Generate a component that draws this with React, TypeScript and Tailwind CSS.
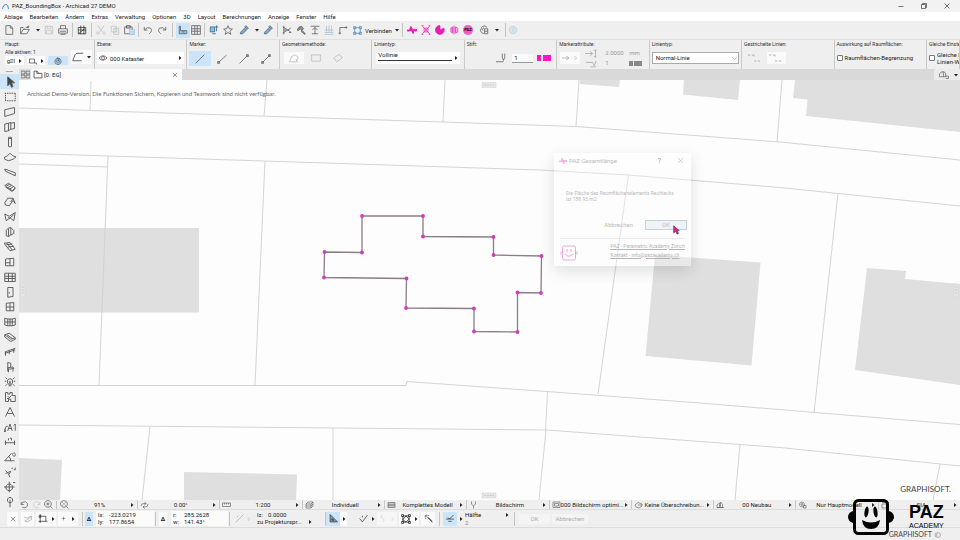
import React from "react";
import clsx from "clsx";

interface IconProps {
  d: string;
  className?: string;
  fill?: string;
}

const Icon = ({ d, className = "w-[10px] h-[10px]", fill = "none" }: IconProps) => (
  <svg
    viewBox="0 0 16 16"
    fill={fill}
    stroke="currentColor"
    strokeWidth="1.2"
    strokeLinejoin="round"
    className={clsx("shrink-0", className)}
    aria-hidden="true"
  >
    <path d={d} />
  </svg>
);

const Caret = ({ down = false }: { down?: boolean }) => (
  <svg viewBox="0 0 8 8" className="w-[4px] h-[4px] shrink-0" fill="#222" aria-hidden="true">
    <path d={down ? "M0 2h8L4 7z" : "M2 0v8l5-4z"} />
  </svg>
);

const Sep = ({ className = "w-[5px]" }: { className?: string }) => (
  <span className={clsx("flex justify-center h-[14px] shrink-0", className)}>
    <span className="w-px bg-[#c4c4c4]" />
  </span>
);

interface ToolProps {
  label: string;
  className?: string;
  children?: React.ReactNode;
}

const Tool = ({ label, className = "w-[14px]", children }: ToolProps) => (
  <button
    aria-label={label}
    className={clsx("flex items-center justify-center h-[15px] shrink-0", className)}
  >
    {children}
  </button>
);

const menus = [
  "Ablage",
  "Bearbeiten",
  "Ändern",
  "Extras",
  "Verwaltung",
  "Optionen",
  "3D",
  "Layout",
  "Berechnungen",
  "Anzeige",
  "Fenster",
  "Hilfe",
];

const palette = [
  { name: "Pfeil", d: "M5 1v12l3-3 2 5 2-1-2-5h4z", fill: "#444" },
  { name: "Markierung", d: "M1 3h2m1 0h2m1 0h2m1 0h2m1 0h2v2m0 1v2m0 1v2m0 1v1h-2m-1 0h-2m-1 0h-2m-1 0h-2m-1 0h-1v-2m0-1v-2m0-1v-2m0-1v-1" },
  { name: "Wand", d: "M1 5l13-3v8L1 14z" },
  { name: "Tür in Wand", d: "M1 4l5-1v10l-5 1zM6 3l3-1v9l-3 2M9 3l5-1v8l-5 1" },
  { name: "Stütze", d: "M6 2q2-1 4 0v12q-2 1-4 0zM6 3q2 1 4 0" },
  { name: "Decke", d: "M0 9l5-3 3-3 3 3 5 2-4 3-6 2-5-2z" },
  { name: "Unterzug", d: "M1 4l14 5v4L2 7z" },
  { name: "Treppe", d: "M1 6l5-3 9 6-4 4zM3 7l5-3M5 9l5-3M7 11l5-3M2 8l9 6 4-4" },
  { name: "Dach", d: "M1 9l4-6h7l3 7-3-4-5 7-5-1zM12 3L9 8" },
  { name: "Schale", d: "M1 4l6 3 8-5-2 11-5-4-5 4zM6 8l1 2 6-5" },
  { name: "Morph", d: "M3 13V6q2-4 6-4v10l-3 2zM9 2l4 4v4l-4 2M6 4v10" },
  { name: "Netz", d: "M0 3l8-1 7 9-7 2zM3 5l8-1M5 8l8-1M4 3l7 9" },
  { name: "Fenster", d: "M2 4l11-1v10H2zM8 3v10M2 9h6" },
  { name: "Fassade", d: "M1 3h14v11H1zM6 3v11M11 3v11M1 7h14M1 10h14" },
  { name: "Tür", d: "M5 2h7v12l-7 1zM7 8v2" },
  { name: "Dachfenster", d: "M3 3l10-1v11H3zM8 3v10M3 8h10" },
  { name: "Raster", d: "M1 3l4 1h6l4-1v9l-4 1H5l-4-1zM5 4v9M8 4v9M11 4v9M1 8h14" },
  { name: "Platte", d: "M1 5l6-2 8 6-6 2zM1 5v3l8 6 6-3V9M4 5l7 5" },
  { name: "Geländer", d: "M1 8l14-5M1 10l14-5M2 8v5M7 6v5M13 4v5" },
  { name: "Objekt", d: "M5 2v7l7-1 1 2-7 1-1-2M5 9v5M6 11v4M12 10v4M5 2l4 1v5" },
  { name: "Lampe", d: "M6 11q-3-3-1-6 3-3 6 0 2 3-1 6zM6 13h4M1 7h2M13 7h2M2 2l2 2M14 2l-2 2M2 13l2-2M14 13l-2-2M7 7l1 3 1-3" },
  { name: "Raum", d: "M2 2h3v2h3V2h3v4h4v8H9v-3H6v3H2zM5 7l2 2 3-3M4 10h3" },
  { name: "Text", d: "M2 14L8 2l6 12M4 10h8" },
  { name: "Etikett", d: "M0 12h2v2H0zM1 12l2-5h2M5 13l3-9 3 9M6 10h4M13 6l2-2v9" },
  { name: "Bemaßung", d: "M1 9h14M2 6v6M14 6v6M6 3v3M8 3h2v3" },
  { name: "Winkel", d: "M1 13h13M1 13L10 3M6 7q3 2 3 6M11 4q4-3 4 1t-4 0" },
  { name: "Radius", d: "M2 6q4 3 6 9M2 10l7-3M9 7l-2 4M10 3h2M13 5h2V2" },
  { name: "Höhe", d: "M7 4a4.500 4.500 0 1 0 .01 0zM7 1v14M0 8h14M12 2h3" },
  { name: "Punkt", d: "M8 2a3.500 3.500 0 1 0 .01 0zM8 5v10" },
];

const TitleBar = () => (
  <header className="flex items-center h-[12px] pl-[2px] pr-[9px] bg-[#f2f2f2]">
    <svg viewBox="0 0 16 16" className="w-[7px] h-[7px]" fill="none" stroke="#3579b8" strokeWidth="2" aria-hidden="true">
      <path d="M0 14Q4 3 9 3t6 11" />
    </svg>
    <h1 className="ml-[3px] text-[6px] leading-[12px]">PAZ_BoundingBox - Archicad 27 DEMO</h1>
    <div className="flex items-center gap-[15px] ml-auto">
      <button aria-label="Minimieren"><Icon className="w-[8px] h-[8px]" d="M3 9h10" /></button>
      <button aria-label="Wiederherstellen"><Icon className="w-[8px] h-[8px]" d="M3 5h8v8H3zM5 5V3h8v8h-2" /></button>
      <button aria-label="Schließen"><Icon className="w-[8px] h-[8px]" d="M3 3l10 10M13 3L3 13" /></button>
    </div>
  </header>
);

const MenuBar = () => (
  <nav className="flex items-center h-[9px] pl-1 gap-[7px] bg-white">
    {menus.map((m) => (
      <button key={m} className="text-[6px] leading-[9px]">
        {m}
      </button>
    ))}
  </nav>
);

const dropper = "M2 14l1-3 6-6 3 3-6 6zM9 3l2-2 4 4-2 2z";

const Toolbar = () => (
  <div className="flex items-center h-[18px] pl-[2px] bg-[#efefef] text-[#555]">
    <Tool label="Neu"><Icon d="M3 1h7l4 4v10H3zM10 1v4h4" /></Tool>
    <Tool label="Öffnen" className="w-[18px]"><Icon d="M1 14V4h4l2 2M1 14h10l4-7H5zM9 5q2-4 5-2M14 1v3h-3" /></Tool>
    <Tool label="Zuletzt geöffnet" className="w-[8px]"><Caret down /></Tool>
    <Tool label="Sichern" className="w-[14px] text-[#c0c0c0]"><Icon d="M2 2h12v12H2zM5 2v4h6V2M4 14V9h8v5" /></Tool>
    <Tool label="Drucken"><Icon d="M4 6V1h8v5M1 6h14v7H1zM3 10h10M4 15h8" /></Tool>
    <Sep />
    <Tool label="Teamwork" className="w-[14px] text-[#333]"><Icon d="M2 4h12v10H2zM2 8h12M6 1v14M11 1v14M2 14l10-8" /></Tool>
    <Sep />
    <Tool label="Ausschneiden" className="w-[14px] text-[#c0c0c0]"><Icon d="M3 1l8 11M13 1L5 12M3 11a2 2 0 1 0 .01 0M13 11a2 2 0 1 0 .01 0" /></Tool>
    <Tool label="Kopieren" className="w-[14px] text-[#c0c0c0]"><Icon d="M2 2h8v9H2zM6 5h8v10H6zM8 8h4M8 11h4" /></Tool>
    <Tool label="Einfügen">
      <span className="relative">
        <Icon d="M1 3h12v11H1zM4 1h6v4H4z" />
        <Icon className="absolute -right-px bottom-0 w-[6px] h-[6px] text-[#5ba0dc]" fill="#d7eafa" d="M1 1h14v14H1zM3 6h10M3 11h10" />
      </span>
    </Tool>
    <Sep />
    <Tool label="Rückgängig"><Icon d="M2 3v5h5M2 8q5-6 10-3 4 4-2 9" /></Tool>
    <Tool label="Wiederholen"><Icon d="M14 3v5H9M14 8Q9 2 4 5q-4 4 2 9" /></Tool>
    <Sep className="w-[7px]" />
    <Tool label="Koordinaten" className="w-[14px] bg-[#cce4f7]"><Icon fill="#9cc8ec" d="M2 14V2h2v7h10v5zM6 11h5" /></Tool>
    <Tool label="Raster" className="w-[12px]"><Icon d="M1 1h14v14H1zM6 1v14M10 1v14M1 6h14M1 10h14" /></Tool>
    <Sep />
    <Tool label="Fangen" className="w-[14px] text-[#2f5f8c]"><Icon fill="#8fbce4" d="M2 3h7v8H2zM12 2v8M10 4l2-3 2 3M5 14h6" /></Tool>
    <Tool label="Favoriten"><Icon d="M8 1l2 5 5 .5-4 3.500 1.500 5L8 12l-4.500 3L5 10 1 6.500 6 6z" /></Tool>
    <Tool label="Aufnehmen" className="w-[18px] text-[#43617c]"><Icon fill="#8aa6bd" d={dropper} /></Tool>
    <Tool label="Aufnahmeoptionen" className="w-[8px]"><Caret down /></Tool>
    <Tool label="Übertragen" className="w-[14px] text-[#43617c]"><Icon fill="#8aa6bd" d={dropper} /></Tool>
    <Sep />
    <Tool label="Trennen"><Icon d="M1 3l13 8M1 13l13-8M2 8h5M3 1v14M11 12h4" /></Tool>
    <Tool label="Anpassen"><Icon fill="#999" d="M2 8q2-6 7-6l3 4-3 3-2-3-4 3zM9 8l6 6-1 1-6-5" /></Tool>
    <Tool label="Ausrichten"><Icon d="M1 2h14M8 4v10M4 8l4-4 4 4M3 14h10" /></Tool>
    <Tool label="Verteilen" className="w-[14px] text-[#a9bfd2]"><Icon d="M4 1v11M8 1v11M12 1v11M1 8h14M1 12h14M1 15h14" /></Tool>
    <Tool label="Ecke"><Icon d="M3 15V4h12M1 13h4M13 2v4" /></Tool>
    <button className="flex items-center w-[50px] h-[15px] pl-[3px] gap-[3px] text-[6px] text-[#222] shrink-0">
      <Icon className="w-[9px] h-[9px] text-[#4583b8]" d="M3 3h10v10H3zM1 1h4v4H1zM11 1h4v4h-4zM1 11h4v4H1zM11 11h4v4h-4z" />
      Verbinden
      <Caret down />
    </button>
    <Sep />
    <Tool label="PAZ Längen" className="w-[14px] text-[#e81cb0]"><Icon fill="#e81cb0" d="M0 8h4l2-6 3 5h7l-1 3-4-1-1 5-3-5-6 1z" /></Tool>
    <Tool label="PAZ Box" className="w-[14px] text-[#e81cb0]"><Icon d="M2 2l4 4M14 2l-4 4M2 14l4-4M14 14l-4-4M5 5h6v6H5zM7 7h2v2H7zM1 1h3M12 1h3M1 15h3M12 15h3" /></Tool>
    <Tool label="PAZ Flächen" className="w-[14px] text-[#e81cb0]"><Icon fill="#e81cb0" d="M8 1v7l6-3A7 7 0 1 1 8 1z" /></Tool>
    <Tool label="PAZ Spiegeln" className="w-[14px] text-[#e81cb0]"><Icon d="M8 1v14M6 3v10L3 11V5zM10 3l4 2v6l-4 2zM5 5v6M11 5v6" /></Tool>
    <Tool label="PAZ">
      <span className="flex items-center justify-center w-[10px] h-[10px] rounded-full bg-[#f05cc4] text-[4px] font-bold text-black">PAZ</span>
    </Tool>
    <Tool label="Grasshopper" className="w-[18px]"><Icon d="M13 4Q8-1 4 4q-4 6 1 9 2 1 3 0M8 4q-3 1-2 5M9 6h5v8H9zM9 10h5" /></Tool>
    <Tool label="Grasshopper-Optionen" className="w-[8px]"><Caret down /></Tool>
    <Sep className="w-[8px]" />
    <Tool label="Hilfe" className="w-[8px] text-[#b5cfdc]"><Icon fill="#d5e5ec" d="M8 2a6 6 0 1 0 .01 0zM8 5v6" /></Tool>
  </div>
);

interface PanelProps {
  title: string;
  children?: React.ReactNode;
}

const Panel = ({ title, children }: PanelProps) => (
  <section className="flex flex-col min-w-0 px-[2px] pt-px border-r border-[#c9c9c9] whitespace-nowrap overflow-hidden">
    <h2 className="text-[5px] leading-[7px] text-[#333]">{title}</h2>
    {children}
  </section>
);

const InfoBox = () => (
  <div className="grid grid-cols-[95px_repeat(9,minmax(0,1fr))_33px] h-[30px] border-t border-[#e2e2e2] bg-[#efefef] text-[#555]">
    <section className="pl-[5px] pt-px border-r border-[#c9c9c9]">
      <h2 className="text-[5px] leading-[7px] text-[#333]">Haupt:</h2>
      <div className="flex gap-[3px]">
        <div>
          <p className="text-[5px] leading-[8px] text-[#333]">Alle aktiven: 1</p>
          <div className="flex gap-[3px] text-[#222]">
            <button className="flex items-center justify-around w-[19px] h-[9px] bg-white text-[6px] leading-[8px]">g≡l <Caret /></button>
            <button aria-label="Geschoss" className="flex items-center justify-around w-[18px] h-[9px] bg-white">
              <Icon className="w-[8px] h-[8px]" d="M1 4h10v8H1zM11 12h4v3" />
              <Caret />
            </button>
            <button aria-label="Magnet" className="flex items-center justify-center w-[20px] h-[9px] bg-[#cce4f7]">
              <Icon className="w-[8px] h-[8px] text-[#234]" d="M8 3a6 6 0 1 0 .01 0zM8 6a3 3 0 1 0 .01 0zM5 3l4-3M8 9l3-7" />
            </button>
          </div>
        </div>
        <button aria-label="Linienzug" className="flex items-center justify-around w-[21px] h-[14px] mt-[2px] bg-[#fafafa]">
          <Icon className="w-[12px] h-[12px]" d="M1 13l3-8q1-2 4-2h7M1 13h12" />
          <Caret down />
        </button>
      </div>
    </section>
    <Panel title="Ebene:">
      <button className="flex items-center h-[12px] mt-[4px] px-[2px] bg-white text-[6px] text-[#222]">
        <Icon className="w-[8px] h-[8px] mr-[3px]" d="M0 8q8-9 16 0-8 9-16 0zM8 5a3 3 0 1 0 .01 0z" />
        000 Kataster
        <span className="ml-auto"><Caret /></span>
      </button>
    </Panel>
    <Panel title="Marker:">
      <div className="flex mt-[3px]">
        <button aria-label="Ohne Marker" className="flex items-center justify-center w-[22px] h-[15px] bg-[#cce4f7]"><Icon d="M1 15L15 1" /></button>
        <button aria-label="Marker am Anfang" className="flex items-center justify-center w-[22px] h-[15px]"><Icon d="M2 14L15 2M1 12h3v3H1z" /></button>
        <button aria-label="Marker am Ende" className="flex items-center justify-center w-[22px] h-[15px]"><Icon d="M1 15L14 2M12 1h3v3h-3z" /></button>
        <button aria-label="Marker beidseitig" className="flex items-center justify-center w-[22px] h-[15px]"><Icon d="M2 14L14 2M12 1h3v3h-3zM1 12h3v3H1z" /></button>
      </div>
    </Panel>
    <Panel title="Geometriemethode:">
      <div className="flex gap-[2px] mt-[4px] pl-[2px] text-[#b5b5b5]">
        <button aria-label="Polygon" className="flex items-center justify-center w-[20px] h-[12px] bg-[#fafafa]"><Icon d="M1 14l3-8 5-3 5 3v4l-3 1 3 3z" /></button>
        <button aria-label="Rechteck" className="flex items-center justify-center w-[20px] h-[12px]"><Icon d="M1 3h14v10H1z" /></button>
        <button aria-label="Gedrehtes Rechteck" className="flex items-center justify-center w-[20px] h-[12px]"><Icon d="M1 8l9-6 5 6-9 6z" /></button>
      </div>
    </Panel>
    <Panel title="Linientyp:">
      <button className="flex items-center h-[12px] mt-[4px] mx-[2px] px-[2px] bg-white text-[6px] leading-[6px] text-[#222]">
        <span className="self-start flex-1 pb-[2px] mr-[2px] border-b border-[#333] text-left">Vollinie</span>
        <Caret />
      </button>
    </Panel>
    <Panel title="Stift:">
      <div className="flex items-center justify-end mt-[5px] pr-[3px]">
        <Icon d="M0 14h12M10 1v6l2 5 2-5V1" />
        <input aria-label="Stift" defaultValue="1" className="w-[21px] h-[9px] ml-[6px] mr-[4px] px-[2px] bg-[#fafafa] border-b border-[#999] text-[6px] text-[#222]" />
        <span className="w-[4px] h-[6px] mr-[2px] bg-[#ff14bd]" />
        <span className="w-[8px] h-[6px] bg-[#ff14bd]" />
      </div>
    </Panel>
    <Panel title="Markerattribute:">
      <div className="flex items-center pl-[1px] text-[#999]">
        <button aria-label="Marker" className="flex items-center justify-around w-[20px] h-[12px] bg-[#fafafa]"><Icon className="w-[8px] h-[8px]" d="M0 8h14M8 4l6 4-6 4" /><Icon className="w-[4px] h-[4px]" d="M4 1v14l8-7z" /></button>
        <div className="grid grid-cols-[20px_24px_14px] items-center ml-[5px] text-[6px] leading-[10px]">
          <Icon className="w-[13px] h-[9px]" d="M-4 8h13M5 4l5 4-5 4M12 2h5M12 14h5M15 2v12" />
          <span>2.0000</span>
          <span>mm</span>
          <Icon className="w-[13px] h-[9px]" d="M-2 6h12M6 14h10M10 6l3 6 3-9" />
          <span>1</span>
          <span className="flex gap-px"><span className="w-[4px] h-[5px] bg-[#888]" /><span className="w-[8px] h-[5px] bg-[#888]" /></span>
        </div>
      </div>
    </Panel>
    <Panel title="Linientyp:">
      <div className="relative flex items-center mt-[4px]">
        <select aria-label="Linientyp" className="appearance-none w-full h-[12px] pl-[3px] bg-white border border-[#aaa] text-[6px] leading-[8px] text-[#222]">
          <option>Normal-Linie</option>
        </select>
        <Icon className="absolute right-[2px] w-[5px] h-[5px]" d="M1 4l7 7 7-7" />
      </div>
    </Panel>
    <Panel title="Gestrichelte Linien:">
      <div className="flex gap-[4px] mt-[4px] pl-[2px] text-[#aaa]">
        <button aria-label="Muster fest" className="flex items-center w-[17px] h-[12px]"><Icon className="w-[16px] h-[12px]" d="M0 4h3m2 0h3v2M8 12h3m2 0h3" /></button>
        <button aria-label="Muster angepasst" className="flex items-center w-[19px] h-[12px] bg-[#fafafa]"><Icon className="w-[16px] h-[12px]" d="M0 4h3m2 0h3v2M8 12h3m2 0h3" /></button>
      </div>
    </Panel>
    <Panel title="Auswirkung auf Raumflächen:">
      <label className="flex items-center gap-[2px] mt-[6px] text-[6px] leading-[8px] text-[#222]">
        <input type="checkbox" className="appearance-none w-[6px] h-[6px] border border-[#777] rounded-[1px] bg-white" />
        Raumflächen-Begrenzung
      </label>
    </Panel>
    <Panel title="Gleiche Einstellungen:">
      <label className="flex items-center gap-[2px] mt-[3px] text-[6px] leading-[7px] text-[#222]">
        <input type="checkbox" className="appearance-none w-[6px] h-[6px] border border-[#777] rounded-[1px] bg-white shrink-0" />
        <span>Gleiche Ein-<br />Linien-Werte</span>
      </label>
    </Panel>
  </div>
);

const Palette = () => (
  <aside className="flex flex-col w-[19px] bg-[#efefef] text-[#555] shrink-0">
    <span className="w-[7px] h-px mt-[2px] mb-[2px] mx-auto bg-[#aaa]" />
    {palette.map((p, i) => (
      <button
        key={p.name}
        aria-label={p.name}
        className={clsx("flex items-center justify-center h-[15px] shrink-0", i === 0 && "bg-[#cce4f7]")}
      >
        <Icon className="w-[12px] h-[12px]" d={p.d} fill={p.fill} />
      </button>
    ))}
  </aside>
);

const TabRow = () => (
  <div className="flex h-[11px] bg-[#d9d9d9] shrink-0">
    <button aria-label="Übersicht" className="flex items-center justify-center w-[12px] bg-[#dedede] text-[#555]">
      <Icon className="w-[9px] h-[9px]" d="M0 2h7v5H0zM9 2h7v5H9zM0 9h7v5H0zM9 9h7v5H9z" />
    </button>
    <div className="flex items-center w-[151px] pl-[2px] pr-[4px] bg-[#fbfbfb]">
      <Icon className="w-[10px] h-[9px]" d="M1 14V2h5v4h9v8zM6 2L9 5" />
      <span className="ml-px text-[6px] leading-[10px]">[0. EG]</span>
      <button aria-label="Tab schließen" className="ml-auto">
        <Icon className="w-[6px] h-[6px] text-[#111]" d="M3 3l10 10M13 3L3 13" />
      </button>
    </div>
    <button aria-label="Ansicht" className="flex items-center gap-[4px] ml-auto pl-[4px] pr-[2px] bg-[#ebebeb] text-[#555]">
      <Icon className="w-[12px] h-[9px]" d="M0 12V7q2-4 6-4t5 4v5zM6 3q2 4 1 9M11 11h5v4h-5" />
      <Caret down />
    </button>
  </div>
);

const outline: [number, number][] = [
  [362, 216], [423, 216], [423, 236.500], [493.500, 237], [493.500, 255], [541.500, 256],
  [541, 293], [517.500, 292.500], [517.500, 332], [474, 331.500], [474, 308.500], [406, 308],
  [406.500, 278.500], [324, 277.500], [324.500, 252], [362, 252.500],
];

const SitePlan = () => (
  <svg
    viewBox="19 80 941 420"
    preserveAspectRatio="xMidYMid slice"
    className="w-full h-full"
    role="img"
    aria-label="Grundriss"
  >
    <g fill="#dfdfdf">
      <path d="M19 228h180v84.500H19z" />
      <path d="M19 458l43 2-2 40H19zM184 472l113 2.500-1 25.500H184z" />
      <path d="M655 255l105.500 7.500-9 103L645.500 356zM867 268l39 3-1 8 55 5v101l-105-15z" />
      <path d="M580 80v4l39 3 1-7zM684 80l-1 14.500 55 5.500 2-20zM795 80l-2 18 14.500 1.500L806 116l154 16V80z" />
    </g>
    <g fill="none" stroke="#cfcfcf" strokeWidth="0.900">
      <path d="M19 108l101 3.500 322 10.500 134 4.500 204 15.500 180 18" />
      <path d="M19 153l89 3 156 5 276 9 88 5 152 12.500 180 18.500M19 164l89 3" />
      <path d="M91 81l-1 29M267 80l-3 36M445 80l-2 42M579 80l-3 46M782 80l-5 62" />
      <path d="M108 156l-9 229M265 161l-10 224M628.500 175L598 394M838 193l-24 220" />
      <path d="M19 385.500h387l1-4 140 10 153 11.500 260 21.500M19 425l528 5 233 17.500 180 18.500" />
      <path d="M547.500 391.500l-2 38.500M150 426.500l-8 73.500M333 428v72M546 430l-7 70M740 444.500l-5 55.500M940 464l-7 36" />
    </g>
    <polygon points={outline.map((p) => p.join(",")).join(" ")} fill="none" stroke="#8c7d88" strokeWidth="1.300" />
    {outline.map(([x, y]) => (
      <circle key={`${x}-${y}`} cx={x} cy={y} r="1.900" fill="#d13bbb" />
    ))}
    <g fill="#e6e6e6" stroke="#d2d2d2" strokeWidth="0.500">
      <path d="M482 82.500h14v5h-14zM482 493h14v5h-14zM21 284h4v13h-4zM954 284h4v13h-4z" />
      <path d="M484 85h10M484 495.500h10M23 286v9M956 286v9" strokeDasharray="2 1" stroke="#b5a8a8" />
    </g>
  </svg>
);

const Dialog = () => (
  <div
    role="dialog"
    aria-label="PAZ Gesamtlänge"
    className="absolute left-[535px] top-[73px] flex flex-col w-[137px] h-[113px] bg-white/30 shadow-[0_5px_14px_rgba(0,0,0,0.12)] text-[5px] leading-[6px] text-[#bcbcbc]"
  >
    <div className="flex items-center h-[15px] px-[5px] bg-white/40">
      <Icon className="w-[8px] h-[8px] text-[#efb0dc]" fill="#efb0dc" d="M0 8h4l2-6 3 5h7l-1 3-4-1-1 5-3-5-6 1z" />
      <span className="ml-[2px] text-[6px]">PAZ Gesamtlänge</span>
      <button aria-label="Hilfe" className="ml-auto text-[7px] text-[#999]">?</button>
      <button aria-label="Schließen" className="ml-[16px] mr-[2px]"><Icon className="w-[7px] h-[7px] text-[#aaa]" d="M2 2l12 12M14 2L2 14" /></button>
    </div>
    <p className="pt-[22px] pl-[12px]">Die Fläche des Raumflächenelements Rechtecks<br />ist 188.95 m2.</p>
    <div className="flex items-center justify-end gap-[12px] mt-[18px] pr-[4px]">
      <button className="text-[6px]">Abbrechen</button>
      <button className="w-[42px] h-[10px] border border-[#c3d3dc] bg-[#eef3f6] text-[6px] leading-[8px]">OK</button>
    </div>
    <div className="flex items-center flex-1 mt-[8px] mx-[6px] border-t border-[#e8e8e8]">
      <svg viewBox="0 0 36 32" className="w-[18px] h-[16px]" fill="none" stroke="#eba6d8" strokeWidth="2" aria-hidden="true">
        <rect x="5" y="2" width="26" height="28" rx="3" />
        <path d="M14 8v6M22 8v6M10 18q8 9 16 0M2 13v6M34 13v6" />
      </svg>
      <div className="flex flex-col gap-[3px] ml-auto pb-[5px] text-[#b4b4b4] underline">
        <a href="#paz">PAZ - Parametric Academy Zurich</a>
        <a href="#kontakt">Kontakt - info@pazacademy.ch</a>
      </div>
    </div>
    <svg viewBox="0 0 10 14" className="absolute left-[119px] top-[72px] w-[7px] h-[10px]" fill="#e81c9c" stroke="#444" strokeWidth="1" aria-hidden="true">
      <path d="M1 1v10l3-2 2 4 2-1-2-4h3z" />
    </svg>
  </div>
);

const views = [
  { text: "0.00°", d: "M1 10q0-5 6-5h4M8 2l3 3-3 3M15 6q0 6-6 6H5M8 9l-3 3 3 3" },
  { text: "1:200", d: "M0 4h16v7H0zM4 4v3M8 4v3M12 4v3" },
  { text: "Individuell", d: "M1 6l4-4h10L11 6zM1 6v8h10V6M15 2v8l-4 4M1 10h10l4-4" },
  { text: "Komplettes Modell", d: "M1 3h14v10H1zM1 6h14M1 8h14M1 10h14" },
  { text: "Bildschirm", d: "M4 1v5l4 4 4-4V1M8 10v5" },
  { text: "000 Bildschirm optimi...", d: "M1 2h14v11H1zM4 5h8v5H4z" },
  { text: "Keine Überschreibun...", d: "M1 8l6-5 8 3v4l-6 4-6-2zM7 8h8" },
  { text: "00 Neubau", d: "M1 13V8l5-4v9zM8 13V2l4 5v6zM1 13h14" },
  { text: "Nur Hauptmodell", d: "M7 2a5 5 0 1 0 .01 0zM7 5a2 2 0 1 0 .01 0zM10 9h5v5h-5z" },
  { text: "SIA", d: "M1 3h14M1 6h10v8H1z" },
];

const StatusRow = () => (
  <div className="grid grid-cols-[118px_repeat(10,minmax(0,1fr))] h-[10px] bg-[#efefef] border-b border-[#dcdcdc] text-[6px] leading-[9px] text-[#222] shrink-0">
    <div className="flex items-center gap-[3px] pl-px pr-[3px] text-[#555]">
      <button aria-label="Vorige Ansicht"><Icon className="w-[9px] h-[9px]" d="M2 3v5h5M2 8Q4 2 10 3q5 3 3 8-4 5-9 2" /></button>
      <button aria-label="Nächste Ansicht" className="text-[#c9c9c9]"><Icon className="w-[9px] h-[9px]" d="M14 3v5H9M14 8Q12 2 6 3 1 6 3 11q4 5 9 2" /></button>
      <button aria-label="Vergrößern"><Icon className="w-[9px] h-[9px]" d="M7 1a6 6 0 1 0 .01 0zM11 11l4 4M4 7h6M7 4v6" /></button>
      <span className="w-px h-[8px] bg-[#c4c4c4]" />
      <button aria-label="Einpassen"><Icon className="w-[9px] h-[9px]" d="M7 1a6 6 0 1 0 .01 0zM11 11l4 4M4 4l2 2M10 4L8 6M4 10l2-2M10 10L8 8" /></button>
      <span className="flex-1 text-center text-[#222]">91%</span>
      <Caret />
    </div>
    {views.map((v) => (
      <button key={v.text} className="flex items-center min-w-0 pl-[2px] pr-[3px] border-l border-[#c9c9c9]">
        <Icon className="w-[9px] h-[8px] text-[#555]" d={v.d} />
        <span className="flex-1 min-w-0 whitespace-nowrap text-center">{v.text}</span>
        <Caret />
      </button>
    ))}
  </div>
);

interface CoordProps {
  name: string;
  value: string;
}

const Coord = ({ name, value }: CoordProps) => (
  <label className="flex items-center h-[7px] gap-[2px]">
    <span className="w-[9px]">{name}</span>
    <input defaultValue={value} className="flex-1 min-w-0 h-[7px]" />
  </label>
);

const white = "flex items-center justify-around h-[14px] bg-[#fafafa] shrink-0";

const Tracker = () => (
  <div className="flex items-center h-[18px] pl-[7px] bg-[#efefef] border-b border-[#dcdcdc] text-[6px] leading-[7px] text-[#222]">
    <button aria-label="Abbrechen" className={clsx(white, "w-[11px] mr-[3px]")}><Icon className="w-[6px] h-[6px]" d="M2 2l12 12M14 2L2 14" /></button>
    <button aria-label="Fanglinie" className={clsx(white, "w-[13px] mr-[2px]")}><Icon className="w-[10px] h-[8px] text-[#999]" d="M1 4l5 2 9-4v7l-9 5-5-2M2 12L14 4" /></button>
    <button aria-label="Raster" className={clsx(white, "w-[20px] mr-[2px]")}><Icon className="w-[10px] h-[9px]" d="M3 0v16M0 13h16M3 4h10v9M1 3h3v3H1z" /><Caret /></button>
    <button aria-label="Ursprung" className={clsx(white, "w-[20px] mr-[2px]")}><Icon className="w-[5px] h-[5px]" d="M8 2v12M2 8h12" /><Caret /></button>
    <Sep />
    <button aria-label="Relativ XY" className="w-[8px] h-[14px] mr-[3px] bg-[#cce4f7] font-bold">Δ</button>
    <div className="w-[58px] h-[15px] px-[2px] bg-[#fbfbfb]">
      <Coord name="lx:" value="-223.0219" />
      <Coord name="ly:" value="177.8654" />
    </div>
    <Sep className="w-[3px]" />
    <button aria-label="Relativ Polar" className="w-[8px] h-[14px] ml-[2px] mr-[4px] bg-[#fafafa] font-bold">Δ</button>
    <div className="w-[57px] h-[15px] px-[2px] bg-[#fbfbfb]">
      <Coord name="r:" value="285.2628" />
      <Coord name="w:" value="141.43°" />
    </div>
    <Sep className="w-[3px]" />
    <button aria-label="Neigung" className="flex items-center justify-center w-[24px] gap-[3px] text-[#aaa]"><Icon className="w-[9px] h-[9px]" d="M1 15L15 1M3 6l3-3" /><Icon className="w-[4px] h-[4px]" d="M4 1v14l8-7z" /></button>
    <div className="w-[59px] h-[15px] px-[2px]">
      <Coord name="lz:" value="0.0000" />
      <button className="flex items-center w-full h-[7px] justify-between whitespace-nowrap">zu Projekturspr... <Caret /></button>
    </div>
    <Sep className="w-[12px] pl-[10px]" />
    <button aria-label="Hilfslinien" className="flex items-center justify-center w-[14px] h-[14px] bg-[#cce4f7]"><Icon className="w-[9px] h-[9px]" fill="#8fa9bd" d="M2 1v13h13zM5 8v3h4z" /></button>
    <button aria-label="Hilfslinienoptionen" className="flex items-center justify-center w-[7px] h-[14px] bg-[#fafafa]"><Caret /></button>
    <button aria-label="Senkrecht" className="flex items-center justify-between w-[28px] pl-[12px]"><Icon className="w-[9px] h-[9px]" d="M1 8l5 6L15 2M6 3v3" /><Caret /></button>
    <button aria-label="Sonderfang" className="flex items-center justify-between w-[20px] h-[14px] ml-[2px] px-[2px] bg-[#f6f6f6] text-[#ccc]"><Icon className="w-[8px] h-[9px]" d="M8 1L3 5l5 3q5 3 0 7" /><Icon className="w-[4px] h-[4px]" d="M4 1v14l8-7z" /></button>
    <button aria-label="Gruppieren" className={clsx(white, "w-[20px] ml-[2px]")}><Icon className="w-[10px] h-[10px]" d="M3 3h10v10H3zM1 1h3v3H1zM12 1h3v3h-3zM1 12h3v3H1zM12 12h3v3h-3zM3 9l5-6 5 5-5 5z" /><Caret /></button>
    <button aria-label="Zauberstab" className={clsx(white, "w-[14px] ml-[2px]")}><Icon className="w-[9px] h-[9px]" d="M6 6l9 9M5 1v3M1 5h3M2 2l2 2M9 2L7 4M2 9l2-2M8 6l7 7" /></button>
    <Sep className="w-[8px]" />
    <button aria-label="Fangpunkt" className="flex items-center justify-center w-[14px] h-[14px] bg-[#cce4f7]"><Icon className="w-[10px] h-[9px]" d="M1 9h14M5 13h6M7 9l7-7M4 6l3 3" /></button>
    <button aria-label="Fangpunktoptionen" className="flex items-center justify-center w-[8px] h-[14px]"><Caret /></button>
    <div className="w-[44px] h-[16px]">
      <button className="flex items-center justify-between w-full h-[8px]">Hälfte <Caret /></button>
      <p className="text-[#888]">2</p>
    </div>
    <Sep className="w-[10px]" />
    <button className="w-[31px] h-[10px] rounded-[1px] bg-[#f4f4f4] text-[#aaa]">OK</button>
    <button className="w-[36px] h-[10px] ml-[2px] rounded-[1px] bg-[#f4f4f4] text-[#aaa]">Abbrechen</button>
  </div>
);

const Brand = () => (
  <div className="absolute right-0 bottom-0 flex flex-col w-[112px] pb-px font-[Lato,sans-serif] text-[#444] pointer-events-none">
    <p className="mb-[4px] pr-[9px] text-right text-[8px] leading-[11px]">GRAPHISOFT.</p>
    <div className="flex items-start gap-[15px]">
      <svg viewBox="0 0 46 37" className="w-[46px] h-[37px]" aria-hidden="true">
        <path d="M6 12a6 6 0 0 0 0 12zM40 12a6 6 0 0 1 0 12z" />
        <rect x="6.500" y="1.500" width="33" height="33" rx="4" fill="none" stroke="#000" strokeWidth="3" />
        <path d="M14 21q9 5 18 0-1 9-9 9t-9-9z" />
        <ellipse cx="18.500" cy="13" rx="2" ry="5.500" transform="rotate(8 18.500 13)" />
        <ellipse cx="27.500" cy="13" rx="2" ry="5.500" transform="rotate(-8 27.500 13)" />
      </svg>
      <div className="pt-[4px] text-center text-black font-['Liberation_Sans',sans-serif]">
        <p className="text-[18px] leading-[18px] font-bold">PAZ</p>
        <p className="text-[7px] leading-[9px]">ACADEMY</p>
      </div>
    </div>
    <p className="flex items-center justify-end gap-[2px] -mt-[6px] pr-[19px] text-[7px] leading-[9px]">
      GRAPHISOFT
      <svg viewBox="0 0 16 16" className="w-[7px] h-[6px]" fill="none" stroke="#999" strokeWidth="2" aria-hidden="true">
        <path d="M2 2v12M6 2h4a6 6 0 0 1 0 12H6z" />
      </svg>
    </p>
  </div>
);

const App = () => {
  return (
    <div className="relative flex flex-col h-screen overflow-hidden bg-[#efefef] font-[Roboto,'Noto_Sans',sans-serif] text-[#222]">
      <TitleBar />
      <MenuBar />
      <Toolbar />
      <InfoBox />
      <div className="flex flex-1 min-h-0">
        <Palette />
        <div className="flex flex-col flex-1 min-w-0">
          <TabRow />
          <main className="relative flex-1 min-h-0 bg-[#fdfdfd]">
            <SitePlan />
            <p className="absolute left-[8px] top-[9px] text-[6px] leading-[9px] font-[Lato,sans-serif] text-[#666]">
              Archicad Demo-Version. Die Funktionen Sichern, Kopieren und Teamwork sind nicht verfügbar.
            </p>
            <Dialog />
          </main>
          <StatusRow />
        </div>
      </div>
      <Tracker />
      <footer className="h-[12px] shrink-0" />
      <Brand />
    </div>
  );
};

export default App;
